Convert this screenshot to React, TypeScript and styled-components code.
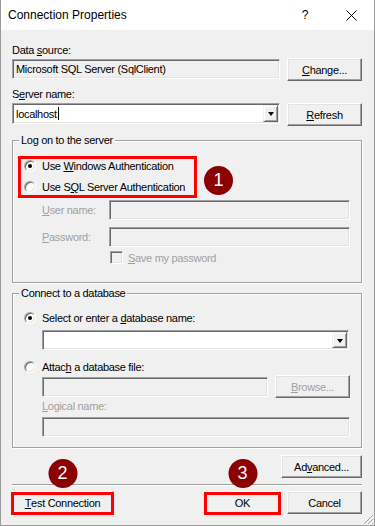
import React from 'react';
import styled, {createGlobalStyle} from 'styled-components';

const GlobalStyle = createGlobalStyle`
  html, body {
    margin: 0;
    padding: 0;
    background: #f0f0f0;
  }
  body {
    font-family: "Liberation Sans", Arial, sans-serif;
  }
`;

const Window = styled.div`
  position: relative;
  width: 375px;
  height: 526px;
  box-sizing: border-box;
  background: #f0f0f0;
  border: 1px solid #9a9a9a;
  border-top: none;
  display: flex;
  flex-direction: column;
  overflow: hidden;
  font-family: "Liberation Sans", Arial, sans-serif;
  font-size: 11px;
  letter-spacing: -0.3px;
  color: #000;
`;

const TitleBar = styled.div`
  height: 30px;
  flex: none;
  background: #fff;
  display: flex;
  align-items: center;
`;

const Title = styled.div`
  flex: 1;
  padding-left: 7px;
  font-size: 12px;
  letter-spacing: 0;
`;

const CaptionButton = styled.div`
  width: 46px;
  height: 30px;
  display: flex;
  align-items: center;
  justify-content: center;
  font-size: 12px;
  letter-spacing: 0;
`;

const Body = styled.div`
  flex: 1;
  display: flex;
  flex-direction: column;
  padding: 14px 12px 0 11px;
`;

const Label = styled.div<{$top?: number; $left?: number; $disabled?: boolean}>`
  height: 13px;
  line-height: 13px;
  white-space: nowrap;
  margin-top: ${p => p.$top ?? 0}px;
  margin-left: ${p => p.$left ?? 0}px;
  color: ${p => (p.$disabled ? '#a0a0a0' : '#000')};
`;

const Key = styled.span`
  text-decoration: underline;
  text-underline-offset: 1px;
`;

const Row = styled.div<{$top?: number; $left?: number; $right?: number}>`
  display: flex;
  align-items: flex-start;
  gap: 7px;
  margin-top: ${p => p.$top ?? 0}px;
  margin-left: ${p => p.$left ?? 0}px;
  margin-right: ${p => p.$right ?? 0}px;
`;

const Field = styled.div<{$width?: number; $height?: number; $white?: boolean; $top?: number}>`
  box-sizing: border-box;
  flex: ${p => (p.$width ? 'none' : '1')};
  width: ${p => (p.$width ? `${p.$width}px` : 'auto')};
  height: ${p => p.$height ?? 20}px;
  margin-top: ${p => p.$top ?? 0}px;
  border: 1px solid;
  border-color: #a0a0a0 #fff #fff #a0a0a0;
  box-shadow: inset 1px 1px 0 #696969, inset -1px -1px 0 #e3e3e3;
  background: ${p => (p.$white ? '#fff' : '#f0f0f0')};
  display: flex;
  align-items: center;
  padding: 1px;
  white-space: nowrap;
`;

const FieldText = styled.span`
  flex: 1;
  padding-left: 2px;
  display: flex;
  align-items: center;
`;

const Caret = styled.span`
  width: 1px;
  height: 13px;
  margin-left: 1px;
  background: #000;
`;

const DropButton = styled.div`
  box-sizing: border-box;
  width: 15px;
  align-self: stretch;
  border: 1px solid;
  border-color: #f0f0f0 #696969 #696969 #f0f0f0;
  box-shadow: inset 1px 1px 0 #fff, inset -1px -1px 0 #a0a0a0;
  background: #f0f0f0;
  display: flex;
  align-items: center;
  justify-content: center;

  &::after {
    content: '';
    border-left: 3.5px solid transparent;
    border-right: 3.5px solid transparent;
    border-top: 4px solid #000;
    margin-top: 1px;
  }
`;

const Button = styled.div<{$width?: number; $disabled?: boolean}>`
  box-sizing: border-box;
  flex: none;
  width: ${p => p.$width ?? 75}px;
  height: 23px;
  border: 1px solid;
  border-color: #fff #696969 #696969 #fff;
  box-shadow: inset -1px -1px 0 #a0a0a0, inset 1px 1px 0 #e3e3e3;
  background: #f0f0f0;
  display: flex;
  align-items: center;
  justify-content: center;
  white-space: nowrap;
  color: ${p => (p.$disabled ? '#a0a0a0' : '#000')};
`;

const Group = styled.fieldset<{$top?: number; $bottom?: number}>`
  margin: ${p => p.$top ?? 0}px 0 0 0;
  padding: 0 0 ${p => p.$bottom ?? 0}px 0;
  min-width: 0;
  border: 1px solid #a0a0a0;
  box-shadow: 1px 1px 0 #fff, inset 1px 1px 0 #fff;
  display: flex;
  flex-direction: column;
`;

const Legend = styled.legend`
  margin-left: 6px;
  padding: 0 2px;
  height: 13px;
  line-height: 13px;
  background: #f0f0f0;
  font-size: 11px;
`;

const RedBox = styled.div`
  box-sizing: border-box;
  width: 179px;
  border: 3px solid #ff0000;
  padding-bottom: 1px;
  display: flex;
  flex-direction: column;
`;

const RadioRow = styled.div<{$top?: number; $left?: number}>`
  display: flex;
  align-items: center;
  height: 14px;
  gap: 6px;
  white-space: nowrap;
  margin-top: ${p => p.$top ?? 0}px;
  margin-left: ${p => p.$left ?? 0}px;
`;

const Radio = styled.span<{$checked?: boolean}>`
  position: relative;
  box-sizing: border-box;
  flex: none;
  width: 12px;
  height: 12px;
  border-radius: 50%;
  border: 1px solid;
  border-color: #a0a0a0 #fff #fff #a0a0a0;
  box-shadow: inset 1px 1px 0 #696969, inset -1px -1px 0 #e3e3e3;
  background: #fff;

  &::after {
    content: '';
    display: ${p => (p.$checked ? 'block' : 'none')};
    position: absolute;
    left: 3px;
    top: 3px;
    width: 4px;
    height: 4px;
    border-radius: 50%;
    background: #000;
  }
`;

const CheckRow = styled.div<{$top?: number; $left?: number}>`
  display: flex;
  align-items: center;
  gap: 5px;
  height: 13px;
  margin-top: ${p => p.$top ?? 0}px;
  margin-left: ${p => p.$left ?? 0}px;
  color: #a0a0a0;
`;

const CheckBox = styled.span`
  box-sizing: border-box;
  flex: none;
  width: 13px;
  height: 13px;
  border: 1px solid;
  border-color: #a0a0a0 #fff #fff #a0a0a0;
  box-shadow: inset 1px 1px 0 #696969, inset -1px -1px 0 #e3e3e3;
  background: #f0f0f0;
`;

const Badge = styled.div<{$top?: number; $left?: number}>`
  box-sizing: border-box;
  flex: none;
  width: 29px;
  height: 29px;
  border-radius: 50%;
  background: #8b0000;
  color: #fff;
  font-size: 18px;
  letter-spacing: 0;
  display: flex;
  align-items: center;
  justify-content: center;
  margin-top: ${p => p.$top ?? 0}px;
  margin-left: ${p => p.$left ?? 0}px;
`;

const Marked = styled.div`
  position: relative;

  &::after {
    content: '';
    position: absolute;
    top: 1px;
    left: -1px;
    right: -1px;
    bottom: -1px;
    border: 3px solid #ff0000;
    pointer-events: none;
  }
`;

const FloatingBadge = styled(Badge)`
  position: absolute;
  left: 50%;
  bottom: calc(100% + 3px);
  transform: translateX(-50%);
`;

const Separator = styled.div<{$top?: number}>`
  height: 1px;
  margin-top: ${p => p.$top ?? 0}px;
  background: #a0a0a0;
  border-bottom: 1px solid #fff;
`;

const Grip = styled.svg`
  position: absolute;
  right: 0;
  bottom: 0;
`;

const CloseIcon = () => (
  <svg width="11" height="11" viewBox="0 0 11 11">
    <path d="M0.5 0.5 L10.5 10.5 M10.5 0.5 L0.5 10.5" stroke="#000" strokeWidth="1" fill="none"/>
  </svg>
);

const App = () => {
  return (
    <>
      <GlobalStyle/>
      <Window>
        <TitleBar>
          <Title>Connection Properties</Title>
          <CaptionButton>?</CaptionButton>
          <CaptionButton><CloseIcon/></CaptionButton>
        </TitleBar>
        <Body>
          <Label>Data <Key>s</Key>ource:</Label>
          <Row $top={1}>
            <Field $top={1}><FieldText>Microsoft SQL Server (SqlClient)</FieldText></Field>
            <Button><Key>C</Key>hange...</Button>
          </Row>

          <Label $top={7}>S<Key>e</Key>rver name:</Label>
          <Row $top={2}>
            <Field $white $height={21}>
              <FieldText>localhost<Caret/></FieldText>
              <DropButton/>
            </Field>
            <Button><Key>R</Key>efresh</Button>
          </Row>

          <Group $top={8} $bottom={18}>
            <Legend>Log on to the server</Legend>
            <Row $top={9} $left={5} style={{gap: 0}}>
              <RedBox>
                <RadioRow $left={3}>
                  <Radio $checked/>
                  <span>Use <Key>W</Key>indows Authentication</span>
                </RadioRow>
                <RadioRow $top={7} $left={3}>
                  <Radio/>
                  <span>Use S<Key>Q</Key>L Server Authentication</span>
                </RadioRow>
              </RedBox>
              <Badge $top={10} $left={7}>1</Badge>
            </Row>
            <Row $top={2} $left={29} $right={11} style={{gap: 0}}>
              <Label $disabled style={{width: 67, marginTop: 4}}><Key>U</Key>ser name:</Label>
              <Field/>
            </Row>
            <Row $top={7} $left={29} $right={11} style={{gap: 0}}>
              <Label $disabled style={{width: 67, marginTop: 4}}><Key>P</Key>assword:</Label>
              <Field/>
            </Row>
            <CheckRow $top={4} $left={97}>
              <CheckBox/>
              <span><Key>S</Key>ave my password</span>
            </CheckRow>
          </Group>

          <Group $top={4} $bottom={10}>
            <Legend>Connect to a database</Legend>
            <RadioRow $top={11} $left={11}>
              <Radio $checked/>
              <span>Select or enter a <Key>d</Key>atabase name:</span>
            </RadioRow>
            <Row $top={5} $left={29} $right={12}>
              <Field $white>
                <FieldText/>
                <DropButton/>
              </Field>
            </Row>
            <RadioRow $top={10} $left={11}>
              <Radio/>
              <span>Attac<Key>h</Key> a database file:</span>
            </RadioRow>
            <Row $top={1} $left={29} $right={11}>
              <Field $top={2}/>
              <Button $disabled><Key>B</Key>rowse...</Button>
            </Row>
            <Label $top={2} $left={29} $disabled><Key>L</Key>ogical name:</Label>
            <Row $top={4} $left={29} $right={11}>
              <Field/>
            </Row>
          </Group>

          <Row $top={7} style={{justifyContent: 'flex-end'}}>
            <Button $width={81}>Ad<Key>v</Key>anced...</Button>
          </Row>
          <Separator $top={6}/>
          <Row $top={5}>
            <Marked>
              <FloatingBadge>2</FloatingBadge>
              <Button $width={101}><Key>T</Key>est Connection</Button>
            </Marked>
            <Marked style={{marginLeft: 'auto'}}>
              <FloatingBadge>3</FloatingBadge>
              <Button>OK</Button>
            </Marked>
            <Button>Cancel</Button>
          </Row>
        </Body>
        <Grip width="12" height="12" viewBox="0 0 12 12">
          <path d="M11 2 L2 11 M11 6 L6 11 M11 10 L10 11" stroke="#a0a0a0" strokeWidth="1" fill="none"/>
          <path d="M12 3 L3 12 M12 7 L7 12" stroke="#fff" strokeWidth="1" fill="none"/>
        </Grip>
      </Window>
    </>
  );
};

export default App;
